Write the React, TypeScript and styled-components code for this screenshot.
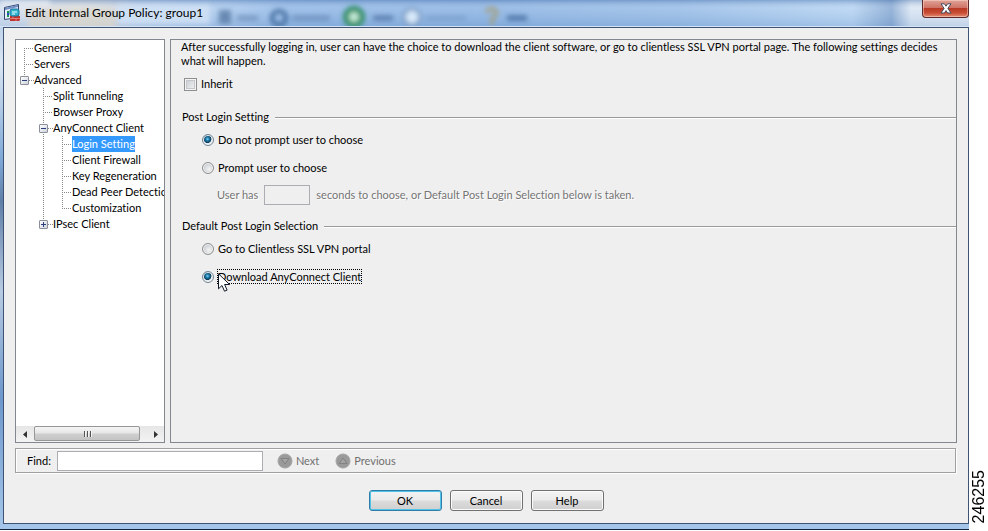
import React, { useState } from "react";
import type { ReactNode } from "react";
import styled, { createGlobalStyle, css } from "styled-components";

const GlobalStyle = createGlobalStyle`
  * { box-sizing: border-box; }
  body {
    margin: 0;
    background: #fff;
    color: #000;
    font: 11px/14px Lato, Tahoma, sans-serif;
    font-variant-ligatures: none;
  }
  button, input { font: inherit; color: inherit; margin: 0; padding: 0; }
  button { border: 0; background: none; }
`;

const Page = styled.div`
  display: grid;
  grid-template-columns: minmax(0, 1fr) 19px;
  min-height: 100vh;
`;

const Window = styled.section`
  position: relative;
  display: flex;
  flex-direction: column;
  margin-bottom: 1px;
  padding: 0 0 5px 3px;
  border-bottom: 1px solid #10233f;
  background: linear-gradient(#a9c4e4, #dbe6f2 12%, #7fa9d8 30%, #5f7fa8 38%, #b8cbe2 55%, #6d98cc 75%, #a5c6ea);
`;

const TitleBar = styled.header`
  position: relative;
  display: flex;
  align-items: flex-start;
  height: 27px;
  margin-left: -3px;
  padding: 4px 0 0 4px;
  overflow: hidden;
  background: linear-gradient(90deg, #d3dff0, #dcdfe2 8%, #d3dae2 11%, #bdd2ec 14%, #aac8ec 22%, #8fb6e5 30%, #8ab2e2 50%, #96bbe6 70%, #b4d2f2 88%, #86a8d2 92%, #d9e5f3 94%, #dce6f3);
`;

const Backdrop = styled.svg`
  position: absolute;
  inset: 0;
`;

const Title = styled.h1`
  position: relative;
  margin: 0 0 0 5px;
  font-size: 12px;
  line-height: 18px;
  font-weight: 400;
`;

const AppIcon = styled.svg`
  position: relative;
`;

const CloseButton = styled.button`
  position: relative;
  display: flex;
  align-items: center;
  justify-content: center;
  width: 47px;
  height: 18px;
  margin: -4px 0 0 auto;
  border: 1px solid #5c2a2a;
  border-top: 0;
  border-radius: 0 0 4px 4px;
  background: linear-gradient(#e0a397, #cf7466 45%, #b93a25 50%, #c94c33 75%, #e08d75);
  box-shadow: inset 0 0 0 1px rgba(255, 220, 210, 0.5);
`;

const Client = styled.main`
  flex: 1;
  display: flex;
  flex-direction: column;
  padding: 11px 11px 12px 11px;
  border: 1px solid #3f5474;
  background: #efefef;
`;

const Panels = styled.div`
  flex: 1;
  display: grid;
  grid-template-columns: 150px minmax(0, 1fr);
  gap: 5px;
`;

const TreePanel = styled.nav`
  display: flex;
  flex-direction: column;
  justify-content: space-between;
  min-width: 0;
  border: 1px solid #828790;
  background: #fff;
`;

const Tree = styled.ul<{ $nested?: boolean }>`
  list-style: none;
  margin: 0;
  padding: 0 0 0 ${p => (p.$nested ? 19 : 0)}px;
  overflow: hidden;
`;

const dots = "repeating-linear-gradient(#888 0 1px, transparent 1px 2px)";

const TreeItem = styled.li<{ $first?: boolean; $last?: boolean }>`
  position: relative;
  &::before {
    content: "";
    position: absolute;
    left: 8px;
    top: ${p => (p.$first ? 8 : 0)}px;
    width: 1px;
    ${p => (p.$last ? css`height: 8px;` : css`bottom: 0;`)}
    background: ${dots};
  }
`;

const TreeRow = styled.div`
  display: flex;
  align-items: center;
  height: 16px;
`;

const Gutter = styled.span`
  flex: none;
  display: flex;
  align-items: center;
  width: 18px;
  padding-left: 4px;
  &::after {
    content: "";
    flex: 1;
    height: 1px;
    background: repeating-linear-gradient(90deg, #888 0 1px, transparent 1px 2px);
  }
`;

const LeafGutter = styled(Gutter)`
  padding-left: 8px;
`;

const Expander = styled.button`
  position: relative;
  display: flex;
  width: 9px;
  height: 9px;
  border: 1px solid #8a8f9a;
  border-radius: 1px;
  background: linear-gradient(135deg, #fff, #cfd3dc);
`;

const TreeLabel = styled.a<{ $selected?: boolean }>`
  height: 16px;
  line-height: 16px;
  white-space: nowrap;
  text-decoration: none;
  color: ${p => (p.$selected ? "#fff" : "#000")};
  background: ${p => (p.$selected ? "#3399ff" : "transparent")};
`;

const ScrollBar = styled.div`
  display: flex;
  height: 16px;
  background: linear-gradient(#e6e6e6, #f3f3f3);
`;

const ScrollArrow = styled.button`
  display: flex;
  align-items: center;
  justify-content: center;
  width: 17px;
`;

const ScrollTrack = styled.div`
  flex: 1;
  display: flex;
  padding: 0 7px 1px 1px;
`;

const ScrollThumb = styled.button`
  flex: 1;
  display: flex;
  align-items: center;
  justify-content: center;
  gap: 2px;
  border: 1px solid #979797;
  border-radius: 2px;
  background: linear-gradient(#f5f5f5, #e6e6e6 48%, #cfcfcf 52%, #c4c4c4);
`;

const Grip = styled.span`
  width: 1px;
  height: 6px;
  background: #555;
  box-shadow: 1px 0 0 #f4f4f4;
`;

const Content = styled.section`
  border: 1px solid #828790;
  padding: 0 0 16px 10px;
`;

const Intro = styled.p`
  margin: 0 12px 0 0;
`;

const Choice = styled.label<{ $indent?: boolean }>`
  display: flex;
  align-items: center;
  width: max-content;
  height: 28px;
  margin-left: ${p => (p.$indent ? 21 : 3)}px;
  gap: 4px;
`;

const CheckBox = styled.input`
  appearance: none;
  width: 13px;
  height: 13px;
  border: 1px solid #8e8f8f;
  background: linear-gradient(135deg, #c4c9d0, #f6f6f6);
  box-shadow: inset 0 0 0 1px #f4f4f4, inset 0 0 0 2px #c3c7cc;
  &:checked { background: #2b6fa8; }
`;

const Radio = styled.input`
  appearance: none;
  width: 12px;
  height: 12px;
  border: 1px solid #8e8f8f;
  border-radius: 50%;
  background: radial-gradient(circle at 60% 60%, #f4f4f4, #c9cdd2 70%);
  box-shadow: inset 0 0 0 1px #f2f2f2;
  &:checked {
    border-color: #6f8494;
    background: radial-gradient(circle at 45% 40%, #7fd0ee 0, #1d7aa8 22%, #0b3a5c 45%, #dfe8ee 52%, #f4f4f4 70%);
  }
`;

const ChoiceText = styled.span<{ $focused?: boolean }>`
  line-height: 14px;
  outline: ${p => (p.$focused ? "1px dotted #000" : "none")};
`;

const Group = styled.fieldset`
  margin: 0;
  padding: 0;
  border: 0;
`;

const GroupHeader = styled.div`
  display: flex;
  align-items: center;
  gap: 6px;
  height: 16px;
  margin-left: 1px;
  &::after {
    content: "";
    flex: 1;
    height: 1px;
    background: #9a9a9a;
    box-shadow: 0 1px 0 #fff;
  }
`;

const InheritRow = styled.div`
  padding: 2px 0 11px;
`;

const Options = styled.div`
  padding-top: 1px;
`;

const TimeoutRow = styled.label`
  display: flex;
  align-items: center;
  gap: 6px;
  height: 22px;
  margin: 2px 0 12px 36px;
  color: #757575;
  text-shadow: 1px 1px 0 #fff;
`;

const SecondsInput = styled.input`
  width: 46px;
  height: 20px;
  border: 1px solid #abadb3;
  background: #efefef;
`;

const FindBar = styled.form`
  display: flex;
  align-items: center;
  height: 25px;
  margin: 5px 1px 0 0;
  padding-left: 11px;
  border: 1px solid #a0a0a0;
  box-shadow: inset 1px 1px 0 #fff, 1px 1px 0 #fff;
`;

const FindLabel = styled.label`
  display: flex;
  align-items: center;
  gap: 6px;
`;

const FindInput = styled.input`
  width: 206px;
  height: 20px;
  padding: 0 3px;
  border: 1px solid #abadb3;
  background: #fff;
`;

const FindButton = styled.button`
  display: flex;
  align-items: center;
  gap: 3px;
  margin-left: 14px;
  color: #6f6f6f;
  & + & { margin-left: 16px; }
`;

const Actions = styled.footer`
  display: flex;
  justify-content: center;
  gap: 8px;
  padding-top: 17px;
`;

const ActionButton = styled.button<{ $primary?: boolean }>`
  width: 73px;
  height: 21px;
  border: 1px solid ${p => (p.$primary ? "#2f7ea8" : "#707070")};
  border-radius: 3px;
  background: linear-gradient(#f3f3f3, #ebebeb 48%, #dcdcdc 52%, #cfcfcf);
  box-shadow: inset 0 0 0 1px ${p => (p.$primary ? "#4fc3ea" : "#fbfbfb")};
`;

const Margin = styled.aside`
  display: flex;
  align-items: flex-end;
  justify-content: center;
  padding-bottom: 8px;
`;

const FigureNumber = styled.span`
  writing-mode: vertical-rl;
  transform: rotate(180deg);
  font: 16px/18px "Liberation Sans", Arial, sans-serif;
`;

const Pointer = styled.svg`
  position: absolute;
  left: 0;
  top: 3px;
`;

const PointerAnchor = styled.span`
  position: relative;
`;

type Node = { label: string; children?: Node[]; open?: boolean };

const nodes: Node[] = [
  { label: "General" },
  { label: "Servers" },
  {
    label: "Advanced",
    open: true,
    children: [
      { label: "Split Tunneling" },
      { label: "Browser Proxy" },
      {
        label: "AnyConnect Client",
        open: true,
        children: [
          { label: "Login Setting" },
          { label: "Client Firewall" },
          { label: "Key Regeneration" },
          { label: "Dead Peer Detection" },
          { label: "Customization" },
        ],
      },
      { label: "IPsec Client", open: false, children: [] },
    ],
  },
];

function Branch({ items, nested }: { items: Node[]; nested?: boolean }) {
  return (
    <Tree $nested={nested}>
      {items.map((n, i) => (
        <TreeItem key={n.label} $first={!nested && i === 0} $last={i === items.length - 1}>
          <TreeRow>
            {n.children ? (
              <Gutter>
                <Expander aria-label={`Toggle ${n.label}`} aria-expanded={n.open}>
                  <svg width="7" height="7" shapeRendering="crispEdges" aria-hidden="true">
                    <path d={n.open ? "M1 3.5h5" : "M1 3.5h5M3.5 1v5"} stroke="#2b3f7c" />
                  </svg>
                </Expander>
              </Gutter>
            ) : (
              <LeafGutter />
            )}
            <TreeLabel href="#" $selected={n.label === "Login Setting"}>{n.label}</TreeLabel>
          </TreeRow>
          {n.open && n.children && <Branch items={n.children} nested />}
        </TreeItem>
      ))}
    </Tree>
  );
}

function RadioChoice({ name, label, value, onPick, focused, children }: {
  name: string; label: string; value: string; onPick: (v: string) => void; focused?: boolean; children?: ReactNode;
}) {
  return (
    <Choice $indent>
      <Radio type="radio" name={name} checked={value === label} onChange={() => onPick(label)} />
      <PointerAnchor>
        <ChoiceText $focused={focused}>{label}</ChoiceText>
        {children}
      </PointerAnchor>
    </Choice>
  );
}

function Disc({ up }: { up?: boolean }) {
  return (
    <svg width="16" height="16" viewBox="0 0 16 16" aria-hidden="true">
      <circle cx="8" cy="8" r="7" fill="#9a9a9a" stroke="#a4a4a4" />
      <path d={up ? "M4 10.500h8L8 5z" : "M4 5.500h8L8 11z"} fill="#a4a4a4" stroke="#828282" />
    </svg>
  );
}

function TitleBackdrop() {
  return (
    <Backdrop width="100%" height="27" aria-hidden="true">
      <defs>
        <filter id="soft" x="-30%" y="-60%" width="160%" height="220%"><feGaussianBlur stdDeviation="2.500" /></filter>
        <linearGradient id="shade" x2="0" y2="1">
          <stop offset="0" stopColor="#486fa8" stopOpacity=".4" />
          <stop offset=".3" stopColor="#fff" stopOpacity=".15" />
          <stop offset="1" stopColor="#5a88c0" stopOpacity=".22" />
        </linearGradient>
      </defs>
      <rect width="100%" height="27" fill="url(#shade)" />
      <g filter="url(#soft)">
        <path d="M0 0h50v5H0z" fill="#fff" opacity=".6" />
        <path d="M28 8h88v22H28z" fill="#dad6cc" opacity=".75" />
        <path d="M118 5h92v19h-92z" fill="#d0e2f6" opacity=".85" />
        <rect x="219" y="10" width="12" height="14" fill="#4d6f9b" opacity=".7" />
        <path d="M237 18h21M292 18h38" stroke="#456796" strokeWidth="5" opacity=".45" />
        <circle cx="279" cy="18" r="7" fill="none" stroke="#345d91" strokeWidth="4" opacity=".85" />
        <circle cx="354" cy="17" r="8" fill="#c4ead6" stroke="#2f8f68" strokeWidth="6" />
        <path d="M373 18h20" stroke="#31598d" strokeWidth="5" opacity=".6" />
        <circle cx="412" cy="17" r="8" fill="#d7e9fa" stroke="#7899c1" strokeWidth="3" />
        <path d="M426 18h40" stroke="#6485b4" strokeWidth="4" opacity=".45" />
        <path d="M487 13q0-5 6-4 6 2 2 7l-3 3v6" fill="none" stroke="#a3a38a" strokeWidth="4" />
        <path d="M507 18h20" stroke="#31598d" strokeWidth="5" opacity=".7" />
      </g>
      <path d="M0 26.500h2000" stroke="#d5e4f5" />
    </Backdrop>
  );
}

export default function App() {
  const [post, setPost] = useState("Do not prompt user to choose");
  const [selection, setSelection] = useState("Download AnyConnect Client");
  const [inherit, setInherit] = useState(false);
  return (
    <>
      <GlobalStyle />
      <Page>
        <Window>
          <TitleBar>
            <TitleBackdrop />
            <AppIcon width="16" height="17" viewBox="0 0 16 17" aria-hidden="true">
              <path d="M.5 3.500 14.500.5v13l-14 2z" fill="#e8eef8" stroke="#34466f" />
              <path d="M1 4 14 1v2L1 6z" fill="#6f8cc4" />
              <path d="M3 8h2M3 12h2" stroke="#189a4c" strokeWidth="2" />
              <path d="M3 10h2" stroke="#2848c8" strokeWidth="2" />
              <path d="M6 12h10v4l-1 1H6z" fill="#c3302d" />
              <path d="M6 14.500h10M9 12v2.500M12 14.500v2.500" stroke="#ee9b8e" strokeWidth=".7" />
              <rect x="6" y="5" width="9" height="7" rx="2" fill="#38b3cf" stroke="#17779d" />
              <path d="M8 8h5M8 10h3" stroke="#e9ffff" />
            </AppIcon>
            <Title>Edit Internal Group Policy: group1</Title>
            <CloseButton aria-label="Close">
              <svg width="12" height="11" viewBox="0 0 12 11" aria-hidden="true">
                <path d="M1 .8h3.400L6 3.200 7.600.8H11L7.900 5.400 11 10H7.600L6 7.600 4.400 10H1l3.100-4.600z" fill="#fff" stroke="#454b5e" />
              </svg>
            </CloseButton>
          </TitleBar>
          <Client>
            <Panels>
              <TreePanel aria-label="Policy sections">
                <Branch items={nodes} />
                <ScrollBar>
                  <ScrollArrow aria-label="Scroll left">
                    <svg width="4" height="7" aria-hidden="true"><path d="M4 0v7L0 3.500z" fill="#333" /></svg>
                  </ScrollArrow>
                  <ScrollTrack>
                    <ScrollThumb aria-label="Scroll position"><Grip /><Grip /><Grip /></ScrollThumb>
                  </ScrollTrack>
                  <ScrollArrow aria-label="Scroll right">
                    <svg width="4" height="7" aria-hidden="true"><path d="M0 0v7l4-3.500z" fill="#333" /></svg>
                  </ScrollArrow>
                </ScrollBar>
              </TreePanel>
              <Content>
                <Intro>
                  After successfully logging in, user can have the choice to download the client software, or go to
                  clientless SSL VPN portal page. The following settings decides what will happen.
                </Intro>
                <InheritRow>
                  <Choice>
                    <CheckBox type="checkbox" checked={inherit} onChange={() => setInherit(!inherit)} />
                    <ChoiceText>Inherit</ChoiceText>
                  </Choice>
                </InheritRow>
                <Group aria-labelledby="post-login">
                  <GroupHeader><span id="post-login">Post Login Setting</span></GroupHeader>
                  <Options>
                    <RadioChoice name="post" label="Do not prompt user to choose" value={post} onPick={setPost} />
                    <RadioChoice name="post" label="Prompt user to choose" value={post} onPick={setPost} />
                    <TimeoutRow>
                      <span>User has</span>
                      <SecondsInput disabled />
                      <span>seconds to choose, or Default Post Login Selection below is taken.</span>
                    </TimeoutRow>
                  </Options>
                </Group>
                <Group aria-labelledby="default-selection">
                  <GroupHeader><span id="default-selection">Default Post Login Selection</span></GroupHeader>
                  <Options>
                    <RadioChoice name="selection" label="Go to Clientless SSL VPN portal" value={selection} onPick={setSelection} />
                    <RadioChoice name="selection" label="Download AnyConnect Client" value={selection} onPick={setSelection} focused>
                      <Pointer width="13" height="20" viewBox="0 0 13 20" aria-hidden="true">
                        <path d="M.5.8v15l3.500-3.300 2.500 5.700 2.600-1.100-2.500-5.600h5z" fill="#fff" stroke="#111827" />
                      </Pointer>
                    </RadioChoice>
                  </Options>
                </Group>
              </Content>
            </Panels>
            <FindBar onSubmit={e => e.preventDefault()}>
              <FindLabel>Find: <FindInput type="text" /></FindLabel>
              <FindButton type="button" disabled><Disc />Next</FindButton>
              <FindButton type="button" disabled><Disc up />Previous</FindButton>
            </FindBar>
            <Actions>
              <ActionButton $primary>OK</ActionButton>
              <ActionButton>Cancel</ActionButton>
              <ActionButton>Help</ActionButton>
            </Actions>
          </Client>
        </Window>
        <Margin><FigureNumber>246255</FigureNumber></Margin>
      </Page>
    </>
  );
}
